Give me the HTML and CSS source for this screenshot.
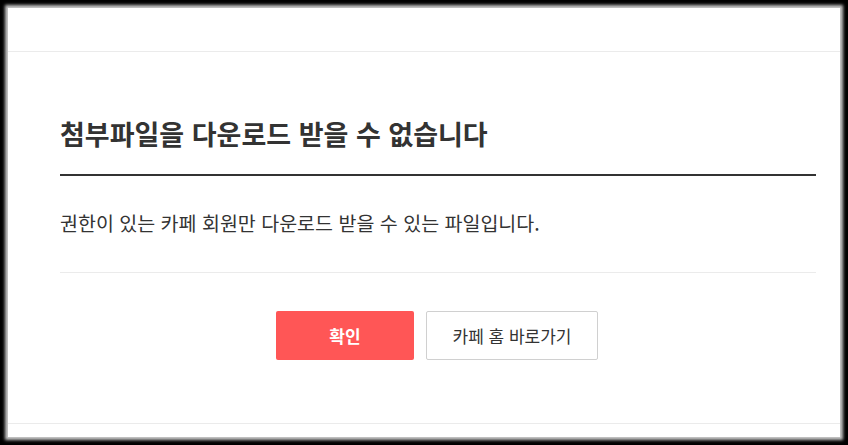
FILE: index.html
```html
<!DOCTYPE html>
<html lang="ko">
<head>
  <meta charset="UTF-8" />
  <title>첨부파일 다운로드</title>
  <link rel="stylesheet" href="styles.css">
</head>
<body>
  <div class="layer">
    <div class="layer-top"></div>
    <div class="layer-body">
      <h1 class="title">첨부파일을 다운로드 받을 수 없습니다</h1>
      <p class="desc">권한이 있는 카페 회원만 다운로드 받을 수 있는 파일입니다.</p>
      <div class="btns">
        <button class="btn btn-ok">확인</button>
        <button class="btn btn-home">카페 홈 바로가기</button>
      </div>
    </div>
    <div class="layer-bottom"></div>
  </div>
</body>
</html>
```

FILE: styles.css
```css
body {
  margin: 0;
  padding: 8px;
  background: #000;
  font-family: "Noto Sans CJK KR", "Noto Sans", sans-serif;
  color: #333;
}
.layer {
  width: 832px;
  height: 429px;
  background: #fff;
  box-shadow: 0 0 3px 3px #c8c8c8;
  display: flex;
  flex-direction: column;
}
.layer-top {
  height: 43px;
  border-bottom: 1px solid #ebebeb;
}
.layer-body {
  flex: 1;
  padding: 62px 24px 0 52px;
}
.title {
  margin: 0;
  font-size: 27px;
  line-height: 40px;
  font-weight: bold;
  padding-bottom: 20px;
  border-bottom: 2px solid #333;
}
.desc {
  margin: 0;
  padding: 33px 0 35px;
  font-size: 19.5px;
  line-height: 28px;
  border-bottom: 1px solid #ebebeb;
}
.btns {
  display: flex;
  justify-content: center;
  gap: 12px;
  padding: 38px 2px 0 0;
}
.btn {
  height: 49px;
  font-family: inherit;
  font-size: 17px;
  border-radius: 2px;
  cursor: pointer;
}
.btn-ok {
  width: 138px;
  background: #ff5656;
  border: none;
  color: #fff;
  font-weight: bold;
}
.btn-home {
  width: 172px;
  background: #fff;
  border: 1px solid #d0d0d0;
  color: #333;
}
.layer-bottom {
  height: 13px;
  border-top: 1px solid #ebebeb;
}
```
